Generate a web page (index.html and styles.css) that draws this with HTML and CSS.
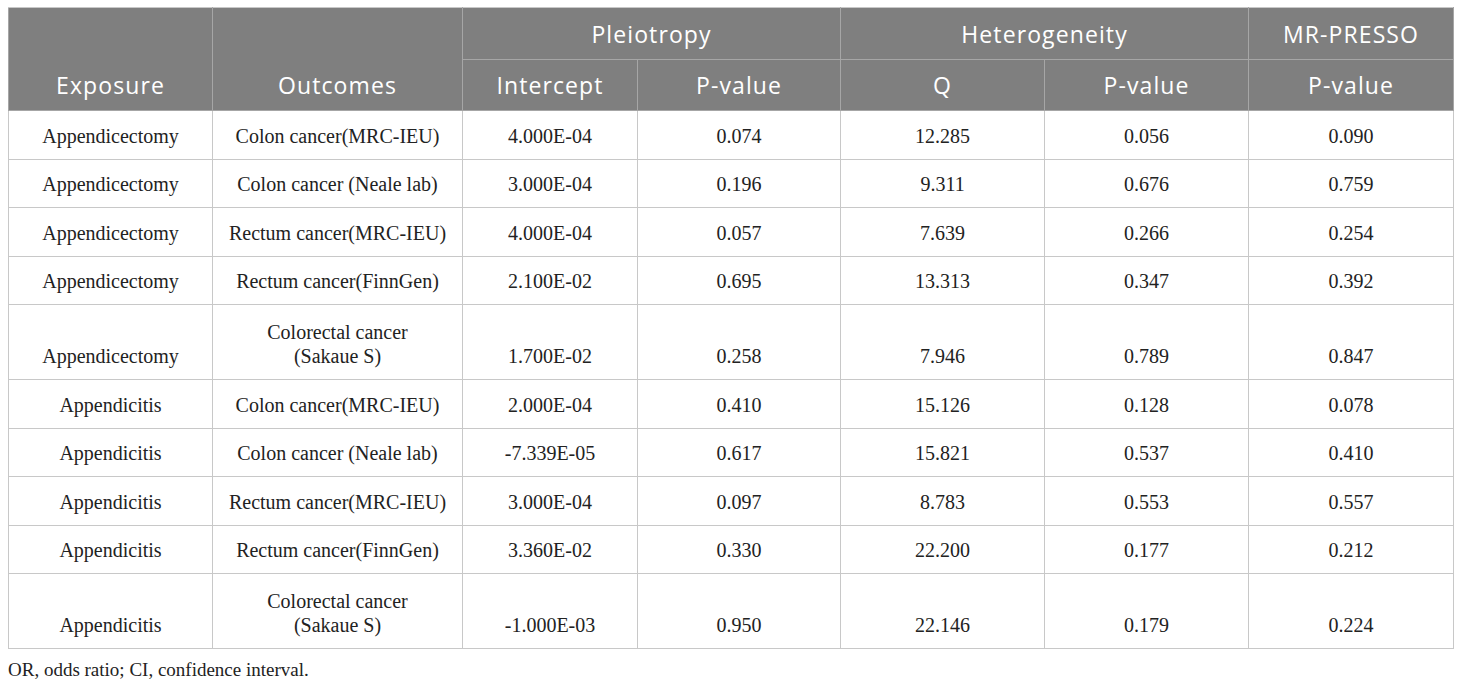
FILE: index.html
```html
<!DOCTYPE html>
<html>
<head>
<meta charset="utf-8">
<link rel="stylesheet" href="styles.css">
</head>
<body>
<div class="wrap">
<table class="data">
  <colgroup>
    <col class="c1"><col class="c2"><col class="c3"><col class="c4"><col class="c5"><col class="c6"><col class="c7">
  </colgroup>
  <thead>
    <tr class="h1">
      <th rowspan="2" class="bottom">Exposure</th>
      <th rowspan="2" class="bottom">Outcomes</th>
      <th colspan="2">Pleiotropy</th>
      <th colspan="2">Heterogeneity</th>
      <th>MR-PRESSO</th>
    </tr>
    <tr class="h2">
      <th>Intercept</th>
      <th>P-value</th>
      <th>Q</th>
      <th>P-value</th>
      <th>P-value</th>
    </tr>
  </thead>
  <tbody>
    <tr><td>Appendicectomy</td><td>Colon cancer(MRC-IEU)</td><td>4.000E-04</td><td>0.074</td><td>12.285</td><td>0.056</td><td>0.090</td></tr>
    <tr><td>Appendicectomy</td><td>Colon cancer (Neale lab)</td><td>3.000E-04</td><td>0.196</td><td>9.311</td><td>0.676</td><td>0.759</td></tr>
    <tr><td>Appendicectomy</td><td>Rectum cancer(MRC-IEU)</td><td>4.000E-04</td><td>0.057</td><td>7.639</td><td>0.266</td><td>0.254</td></tr>
    <tr><td>Appendicectomy</td><td>Rectum cancer(FinnGen)</td><td>2.100E-02</td><td>0.695</td><td>13.313</td><td>0.347</td><td>0.392</td></tr>
    <tr class="tall"><td>Appendicectomy</td><td>Colorectal cancer<br>(Sakaue S)</td><td>1.700E-02</td><td>0.258</td><td>7.946</td><td>0.789</td><td>0.847</td></tr>
    <tr><td>Appendicitis</td><td>Colon cancer(MRC-IEU)</td><td>2.000E-04</td><td>0.410</td><td>15.126</td><td>0.128</td><td>0.078</td></tr>
    <tr><td>Appendicitis</td><td>Colon cancer (Neale lab)</td><td>-7.339E-05</td><td>0.617</td><td>15.821</td><td>0.537</td><td>0.410</td></tr>
    <tr><td>Appendicitis</td><td>Rectum cancer(MRC-IEU)</td><td>3.000E-04</td><td>0.097</td><td>8.783</td><td>0.553</td><td>0.557</td></tr>
    <tr><td>Appendicitis</td><td>Rectum cancer(FinnGen)</td><td>3.360E-02</td><td>0.330</td><td>22.200</td><td>0.177</td><td>0.212</td></tr>
    <tr class="tall"><td>Appendicitis</td><td>Colorectal cancer<br>(Sakaue S)</td><td>-1.000E-03</td><td>0.950</td><td>22.146</td><td>0.179</td><td>0.224</td></tr>
  </tbody>
</table>
<p class="note">OR, odds ratio; CI, confidence interval.</p>
</div>
</body>
</html>
```

FILE: styles.css
```css
html, body {
  margin: 0;
  padding: 0;
  background: #ffffff;
}
.wrap {
  padding: 7px 7px 0 8px;
}
.data {
  border-collapse: collapse;
  width: 1445px;
  table-layout: fixed;
}
.c1 { width: 204px; }
.c2 { width: 250px; }
.c3 { width: 175px; }
.c4 { width: 203px; }
.c5 { width: 204px; }
.c6 { width: 204px; }
.c7 { width: 205px; }

.data th {
  background: #7f7f7f;
  color: #ffffff;
  font-family: "Open Sans", "Noto Sans", sans-serif;
  font-weight: 400;
  font-size: 23px;
  letter-spacing: 1.1px;
  text-align: center;
  border: 1px solid #a6a6a6;
  padding: 0 4px;
  vertical-align: middle;
}
.data thead tr:first-child th {
  border-top-color: #c8c8c8;
}
.data .h1 { height: 52px; }
.data .h2 { height: 51px; }
.data th.bottom {
  vertical-align: bottom;
  padding-bottom: 9px;
}

.data td {
  font-family: "Liberation Serif", "Times New Roman", serif;
  font-size: 20px;
  line-height: 24px;
  color: #222222;
  text-align: center;
  border: 1px solid #c8c8c8;
  vertical-align: bottom;
  padding: 0 4px 11px;
}
.data tbody tr { height: 48.5px; }
.data tbody tr.tall { height: 75px; }

.note {
  margin: 10px 0 0 0;
  font-family: "Liberation Serif", "Times New Roman", serif;
  font-size: 19px;
  color: #222222;
}
```
